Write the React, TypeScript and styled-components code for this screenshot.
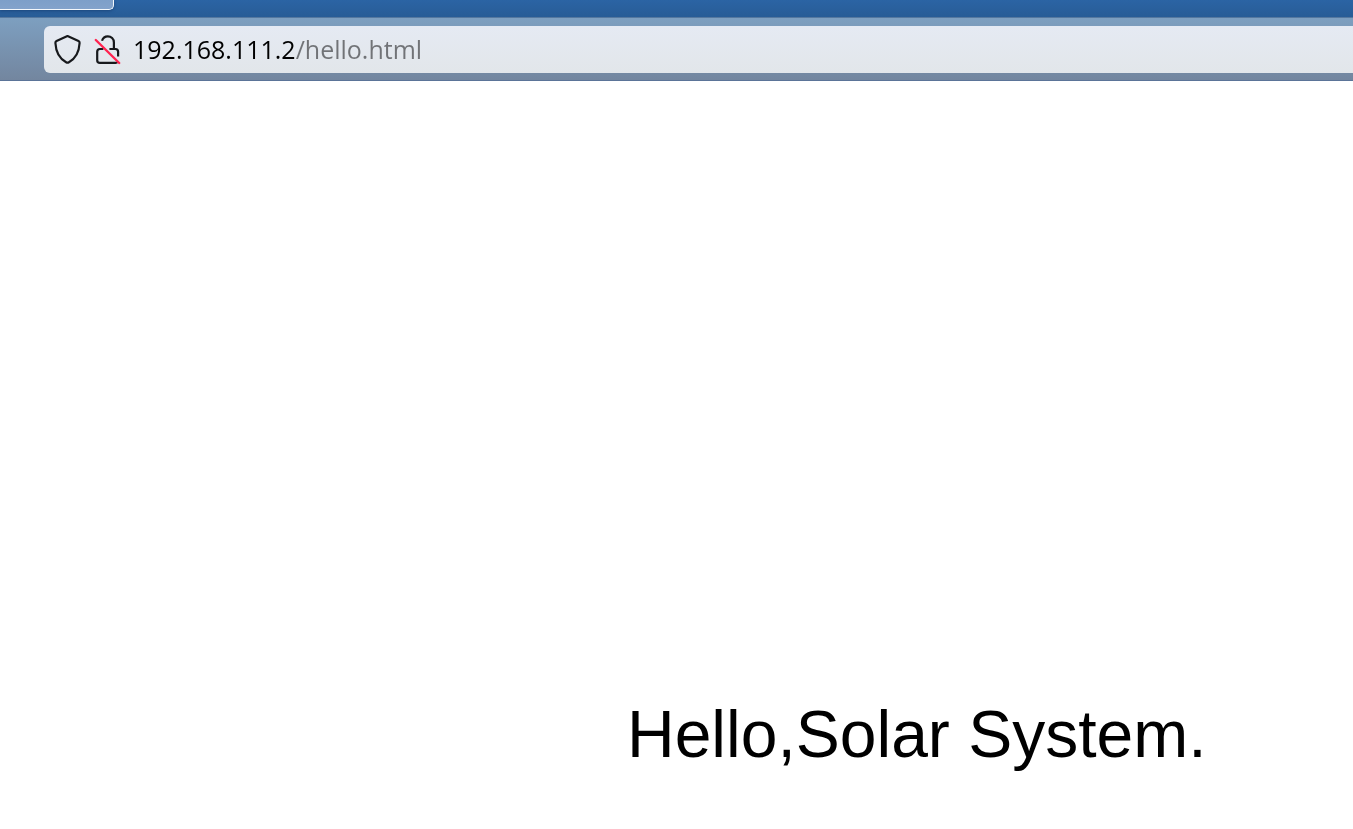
import React from "react";
import styled, { createGlobalStyle } from "styled-components";

const GlobalStyle = createGlobalStyle`
  *, *::before, *::after { box-sizing: border-box; }
  html, body { margin: 0; background: #fff; }
`;

const Browser = styled.div`
  display: flex;
  flex-direction: column;
  min-height: 100vh;
  overflow-x: hidden;
`;

const TabStrip = styled.div`
  height: 18px;
  background: linear-gradient(#2b64a4, #285c96);
  border-bottom: 1px solid #55789f;
`;

const Tab = styled.div`
  width: 114px;
  height: 10px;
  background: linear-gradient(#7d9fc9, #83a3cb);
  border: 1px solid #f4f8fc;
  border-width: 0 1px 1px 0;
  border-radius: 0 0 5px 0;
  box-shadow: 0 1px 3px #1d477c;
`;

const Toolbar = styled.header`
  display: flex;
  padding: 8px 0 7px 44px;
  background: linear-gradient(#7d9fc0, #73869f);
  border-bottom: 1px solid #5b7498;
`;

const AddressField = styled.div`
  flex: 1;
  display: flex;
  align-items: center;
  gap: 12px;
  height: 47px;
  padding: 0 0 1px 9px;
  border-radius: 6px 0 0 6px;
  background: linear-gradient(#e5eaf3, #e2e6ea);
`;

const IconButton = styled.button`
  display: flex;
  flex: none;
  padding: 0;
  border: 0;
  background: none;
`;

/* The host is black and the path after it is grey. */
const AddressInput = styled.input`
  flex: 1;
  min-width: 0;
  height: 38px;
  padding: 0;
  border: 0;
  outline: 0;
  font: 25px/38px "Open Sans", "Noto Sans", sans-serif;
  color: transparent;
  background: linear-gradient(90deg, #000 162px, #717377 162px);
  background-clip: text;
  -webkit-background-clip: text;
`;

const Page = styled.main`
  flex: 1;
  padding: 615px 0 0 627px;
`;

const Greeting = styled.p`
  margin: 0;
  font: 66px/76px "Liberation Sans", Arial, sans-serif;
  color: #000;
  white-space: nowrap;
`;

const ShieldIcon = () => (
  <svg width="29" height="32" viewBox="0 0 29 32" fill="none" aria-hidden="true">
    <path
      d="M14.5 3 L25.5 8 Q26.7 8.6 26.6 10 C26.2 17.6 23.6 25 15.9 29.2 Q14.5 30 13.1 29.2 C5.4 25 2.8 17.6 2.4 10 Q2.3 8.6 3.5 8 Z"
      stroke="#17191c"
      strokeWidth="2.2"
      strokeLinejoin="round"
    />
  </svg>
);

const InsecureLockIcon = () => (
  <svg width="27" height="32" viewBox="0 0 27 32" fill="none" aria-hidden="true">
    <g stroke="#17191c" strokeWidth="2.2" strokeLinejoin="round">
      <path d="M8 7.8 C8.8 5.2 11 3.3 13.8 3.3 C17.2 3.3 19.9 6 19.9 9.4 V16" />
      <path d="M15.4 16 H21.4 Q24.1 16 24.1 18.7 V23.4" />
      <path d="M9.4 16 H5.9 Q3.2 16 3.2 18.7 V27.2 Q3.2 29.9 5.9 29.9 H21.6 Q23 29.9 23.5 29" />
    </g>
    <path d="M1.8 7 L25.2 30" stroke="#ff2350" strokeWidth="2.4" strokeLinecap="round" />
  </svg>
);

export default function App() {
  return (
    <>
      <GlobalStyle />
      <Browser>
        <TabStrip>
          <Tab />
        </TabStrip>
        <Toolbar>
          <AddressField>
            <IconButton type="button" aria-label="Tracking protection">
              <ShieldIcon />
            </IconButton>
            <IconButton type="button" aria-label="Connection is not secure">
              <InsecureLockIcon />
            </IconButton>
            <AddressInput
              type="text"
              aria-label="Address"
              spellCheck={false}
              defaultValue="192.168.111.2/hello.html"
            />
          </AddressField>
        </Toolbar>
        <Page>
          <Greeting>Hello,Solar System.</Greeting>
        </Page>
      </Browser>
    </>
  );
}
